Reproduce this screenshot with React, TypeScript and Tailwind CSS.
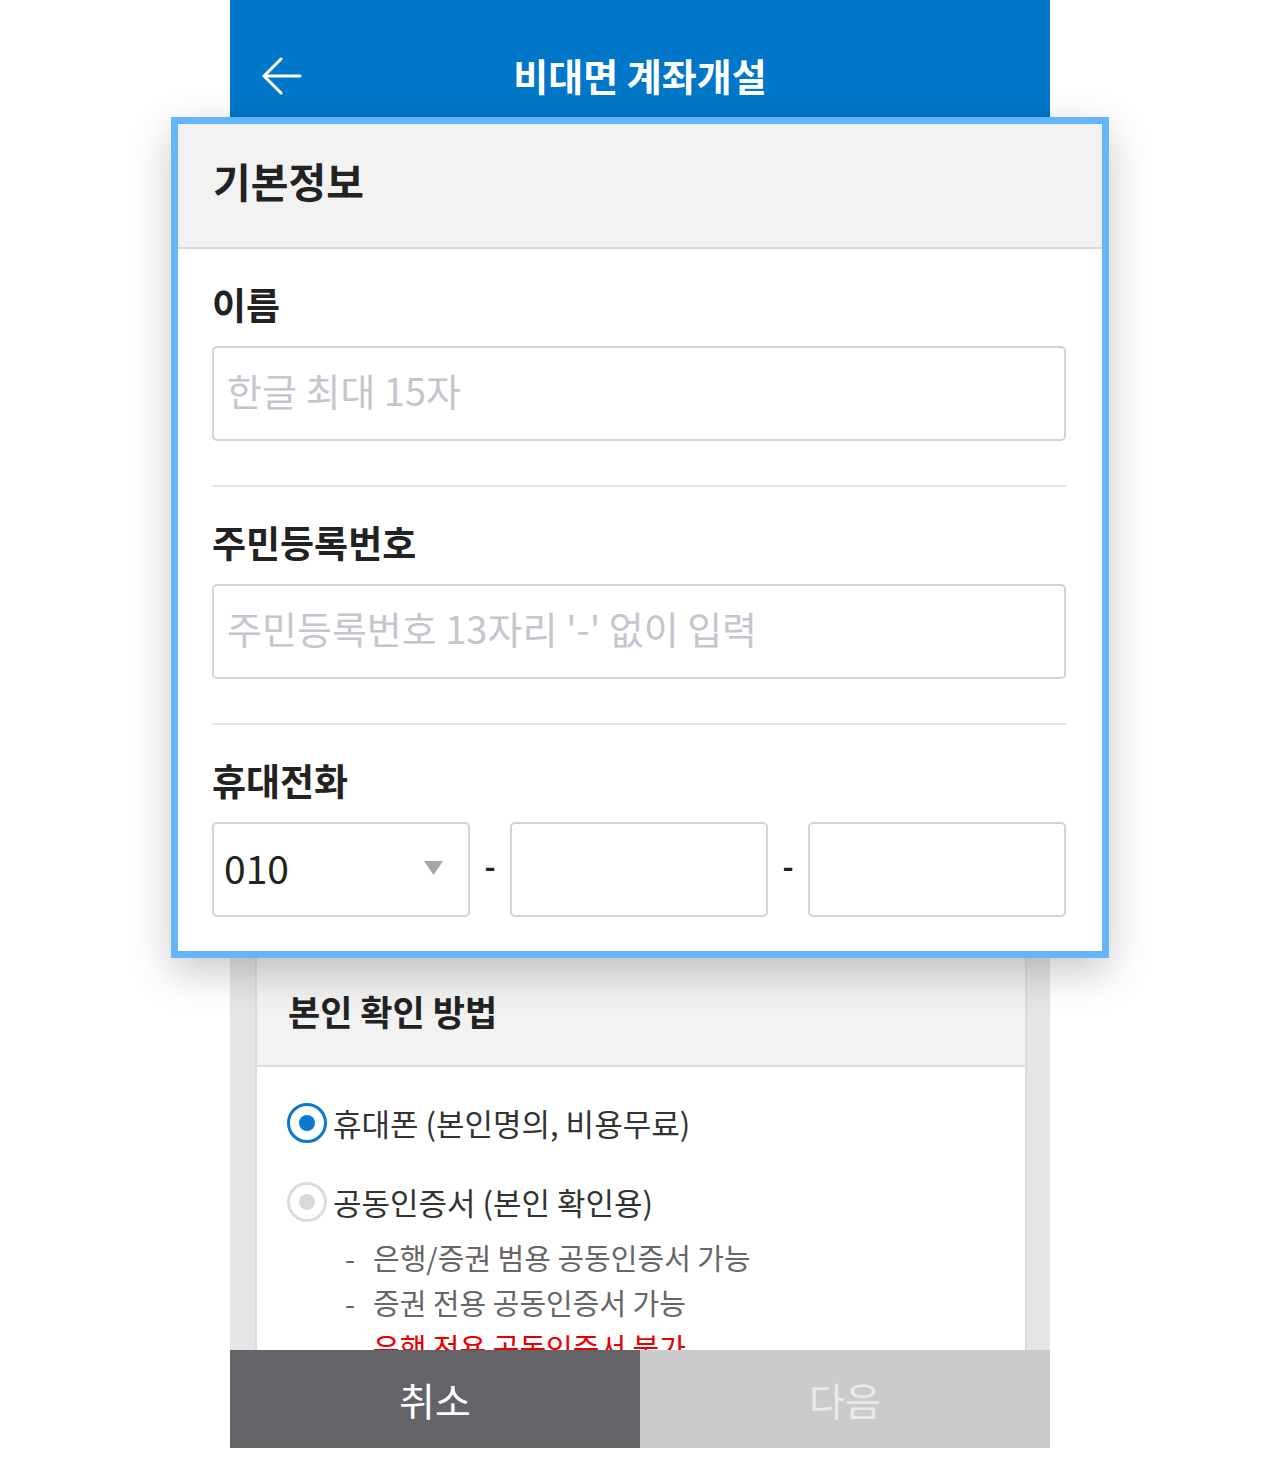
import React from "react";

const font = { fontFamily: '"Noto Sans CJK KR", "Noto Sans", sans-serif' };

function Label({ children }: { children: React.ReactNode }) {
  return <div className="text-[37px] leading-[41px] font-bold text-[#222222]">{children}</div>;
}

function Divider() {
  return <div className="mt-[44px] mb-[35px] h-[2px] bg-[#e4e4e4]" />;
}

function TextBox({ placeholder }: { placeholder: string }) {
  return (
    <input
      type="text"
      placeholder={placeholder}
      className="mt-[21px] block h-[95px] w-full rounded-[5px] border-2 border-[#d3d3d3] bg-white pb-[8px] pl-[13px] text-[38px] text-[#222] outline-none placeholder:text-[#c5c5cd]"
      style={font}
    />
  );
}

function Radio({ checked }: { checked: boolean }) {
  return (
    <span
      className={
        checked
          ? "flex h-[40px] w-[40px] shrink-0 items-center justify-center rounded-full border-[3px] border-[#0a78cf] bg-white"
          : "flex h-[40px] w-[40px] shrink-0 items-center justify-center rounded-full border-[3px] border-[#dcdcdc] bg-white"
      }
    >
      <span
        className={
          checked
            ? "h-[16px] w-[16px] rounded-full bg-[#0a78cf]"
            : "h-[16px] w-[16px] rounded-full bg-[#d9d9d9]"
        }
      />
    </span>
  );
}

export default function App() {
  return (
    <div className="flex min-h-[1458px] w-full flex-col items-center bg-white" style={font}>
      <div className="flex w-[820px] flex-col">
        {/* Top app bar */}
        <div className="h-[117px] bg-[#0077c8] pt-[40px]">
          <div className="relative flex h-[70px] items-center justify-center">
            <svg
              className="absolute left-[32px] top-[16px]"
              width="40"
              height="40"
              viewBox="0 0 40 40"
              fill="none"
              stroke="white"
              strokeWidth="3"
              strokeLinecap="round"
              strokeLinejoin="round"
            >
              <path d="M19 3 L2 20 L19 37" />
              <path d="M2 20 L38 20" />
            </svg>
            <span className="text-[38px] font-bold leading-none text-white">비대면 계좌개설</span>
          </div>
        </div>

        {/* Highlighted basic info card */}
        <div className="relative z-10 mx-[-59px] border-[7px] border-[#64b5fc] bg-white shadow-[0_14px_40px_rgba(0,0,0,0.22)]">
          <div className="flex h-[125px] items-center border-b-2 border-[#d9d9d9] bg-[#f2f2f2] pb-[10px] pl-[35px]">
            <span className="text-[41px] font-bold text-[#222222]">기본정보</span>
          </div>
          <div className="pb-[34px] pl-[34px] pr-[36px] pt-[35px]">
            <Label>이름</Label>
            <TextBox placeholder="한글 최대 15자" />
            <Divider />
            <Label>주민등록번호</Label>
            <TextBox placeholder="주민등록번호 13자리 '-' 없이 입력" />
            <Divider />
            <Label>휴대전화</Label>
            <div className="mt-[21px] flex h-[95px] items-center">
              <div className="flex h-full w-[258px] items-center justify-between rounded-[5px] border-2 border-[#d3d3d3] bg-white pb-[4px] pl-[10px] pr-[25px]">
                <span className="text-[39px] text-[#222222]">010</span>
                <svg width="19" height="14" viewBox="0 0 19 14">
                  <path d="M0 0 L19 0 L9.5 14 Z" fill="#a6a6a6" />
                </svg>
              </div>
              <div className="flex w-[40px] justify-center pb-[8px] text-[30px] font-bold text-[#222]">-</div>
              <div className="h-full w-[258px] rounded-[5px] border-2 border-[#d3d3d3] bg-white" />
              <div className="flex w-[40px] justify-center pb-[8px] text-[30px] font-bold text-[#222]">-</div>
              <div className="h-full w-[258px] rounded-[5px] border-2 border-[#d3d3d3] bg-white" />
            </div>
          </div>
        </div>

        {/* Lower section */}
        <div className="h-[392px] overflow-hidden bg-[#e5e5e5] pl-[25px] pr-[23px]">
          <div className="border-x-2 border-b-2 border-[#dcdcdc] bg-white">
            <div className="flex h-[109px] items-center border-b-2 border-[#dcdcdc] bg-[#f2f2f2] pl-[31px]">
              <span className="text-[35px] font-bold text-[#222222]">본인 확인 방법</span>
            </div>
            <div className="pl-[30px] pt-[34px]">
              <div className="flex h-[44px] items-center gap-[6px]">
                <Radio checked />
                <span className="text-[31px] text-[#333333]">휴대폰 (본인명의, 비용무료)</span>
              </div>
              <div className="mt-[35px] flex h-[44px] items-center gap-[6px]">
                <Radio checked={false} />
                <span className="text-[31px] text-[#333333]">공동인증서 (본인 확인용)</span>
              </div>
              <ul className="mt-[11px] pl-[58px] text-[29px] leading-[45px] text-[#666666]">
                <li className="flex">
                  <span className="w-[28px]">-</span>
                  <span>은행/증권 범용 공동인증서 가능</span>
                </li>
                <li className="flex">
                  <span className="w-[28px]">-</span>
                  <span>증권 전용 공동인증서 가능</span>
                </li>
                <li className="flex text-[#e60000]">
                  <span className="w-[28px]" />
                  <span>은행 전용 공동인증서 불가</span>
                </li>
              </ul>
            </div>
          </div>
        </div>

        {/* Bottom buttons */}
        <div className="flex h-[98px]">
          <div className="flex w-1/2 items-center justify-center bg-[#636368] text-[39px] text-white">취소</div>
          <div className="flex w-1/2 items-center justify-center bg-[#cbcbcb] text-[39px] text-[#e9e9e9]">다음</div>
        </div>
      </div>
    </div>
  );
}
